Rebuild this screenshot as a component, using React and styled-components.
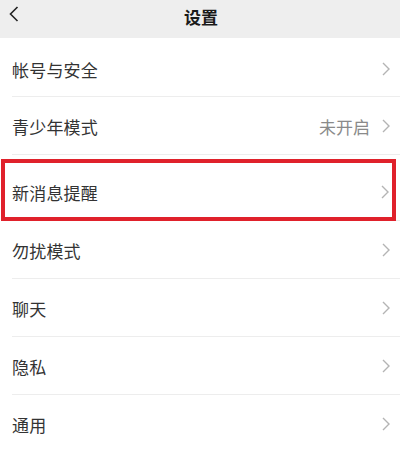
import React from "react";
import styled, { createGlobalStyle } from "styled-components";

const GlobalStyle = createGlobalStyle`
  html, body {
    margin: 0;
    padding: 0;
    background: #fff;
    font-family: "Noto Sans CJK SC", "Noto Sans", sans-serif;
  }
`;

const items = [
  { label: "帐号与安全", h: 56 },
  { label: "青少年模式", value: "未开启", h: 58 },
  { label: "新消息提醒", h: 66, highlight: true },
  { label: "勿扰模式", h: 58 },
  { label: "聊天", h: 58 },
  { label: "隐私", h: 58 },
  { label: "通用", h: 58 },
];

function BackIcon() {
  return (
    <svg width="10" height="16" viewBox="0 0 10 16">
      <path d="M8.5 1 L1.5 8 L8.5 15" fill="none" stroke="#222" strokeWidth="1.6" />
    </svg>
  );
}

function Chevron() {
  return (
    <svg width="8" height="14" viewBox="0 0 8 14">
      <path d="M1 1 L7 7 L1 13" fill="none" stroke="#b4b4b4" strokeWidth="1.4" />
    </svg>
  );
}

export default function App() {
  return (
    <>
      <GlobalStyle />
      <Page>
        <Header>
          <BackButton>
            <BackIcon />
          </BackButton>
          <Title>设置</Title>
        </Header>
        <List>
          {items.map((item, i) => (
            <Row key={item.label} $h={item.h} $last={i === items.length - 1}>
              {item.highlight ? (
                <Highlight>
                  <Label>{item.label}</Label>
                  <Right>
                    <Chevron />
                  </Right>
                </Highlight>
              ) : (
                <Inner>
                  <Label>{item.label}</Label>
                  <Right>
                    {item.value && <Value>{item.value}</Value>}
                    <Chevron />
                  </Right>
                </Inner>
              )}
            </Row>
          ))}
        </List>
      </Page>
    </>
  );
}

const Page = styled.div`
  width: 400px;
  height: 452px;
  overflow: hidden;
  background: #fff;
`;

const Header = styled.div`
  height: 38px;
  background: #eeeeee;
  display: flex;
  align-items: center;
  justify-content: center;
  position: relative;
`;

const BackButton = styled.div`
  position: absolute;
  left: 9px;
  top: 6px;
  display: flex;
`;

const Title = styled.div`
  font-size: 17px;
  font-weight: 700;
  color: #1a1a1a;
  margin-left: 2px;
  margin-top: -6px;
`;

const List = styled.div`
  padding-top: 3px;
  display: flex;
  flex-direction: column;
`;

const Row = styled.div`
  height: ${(p) => p.$h}px;
  display: flex;
  flex-direction: column;
  position: relative;
  &::after {
    content: "";
    position: absolute;
    left: 12px;
    right: 0;
    bottom: 0;
    height: 1px;
    background: #ededed;
  }
`;

const Inner = styled.div`
  flex: 1;
  display: flex;
  align-items: center;
  justify-content: space-between;
  padding: 0 10px 0 12px;
`;

const Highlight = styled.div`
  flex: 1;
  display: flex;
  align-items: center;
  justify-content: space-between;
  margin: 4px 4px 0 1px;
  border: 4px solid #e0212b;
  padding: 4px 3px 0 7px;
  background: #fff;
  position: relative;
  z-index: 1;
`;

const Label = styled.span`
  font-size: 17px;
  color: #333;
  letter-spacing: 0.2px;
`;

const Right = styled.div`
  display: flex;
  align-items: center;
  gap: 12px;
`;

const Value = styled.span`
  font-size: 17px;
  color: #8a8a8a;
`;
